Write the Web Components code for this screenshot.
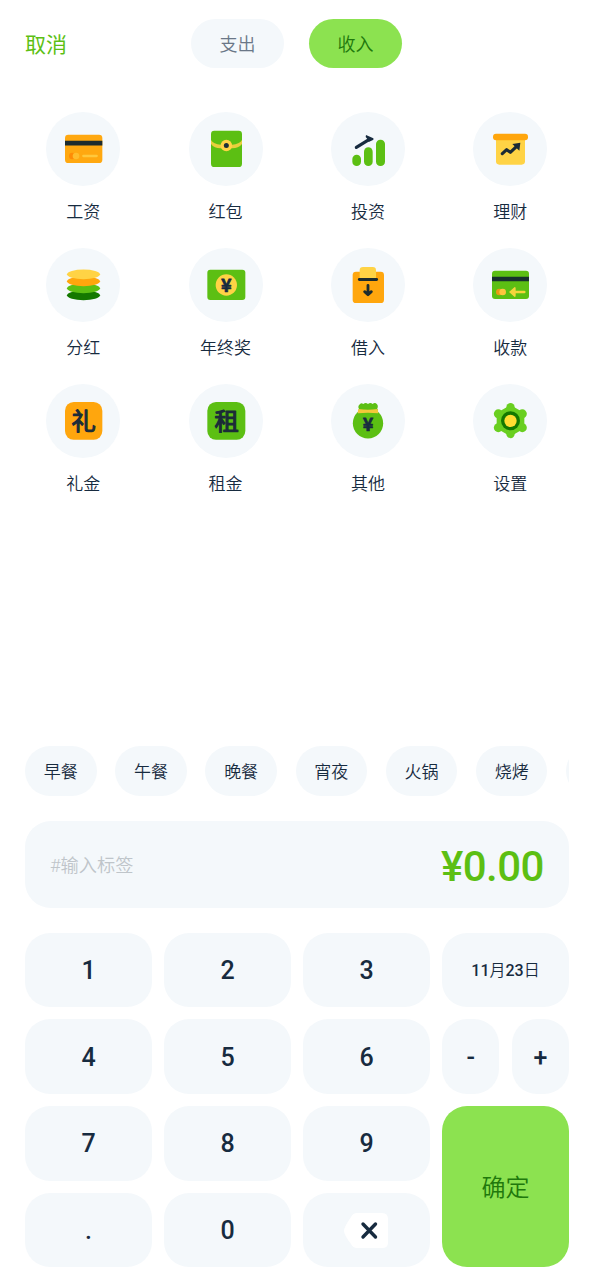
<!DOCTYPE html>
<html lang="zh-CN">
<head>
<meta charset="utf-8">
<title>记一笔</title>
<style>
html,body{margin:0;height:100%;background:#fff;overflow:hidden}
body{font-family:Roboto,"Noto Sans CJK SC",sans-serif;color:#172b3f;--tile:#f4f8fb;--lime:#8ce250;--green:#5cbf13}
</style>
</head>
<body>
<entry-page></entry-page>
<script>
const define = (name, html, setup) => {
  const t = document.createElement('template');
  t.innerHTML = html;
  customElements.define(name, class extends HTMLElement {
    constructor() {
      super();
      this.attachShadow({mode: 'open'}).append(t.content.cloneNode(true));
    }
    connectedCallback() { if (setup) setup(this, this.shadowRoot); }
  });
};

/* Each icon: viewBox, then drawing */
const glyph = 'font-family="Noto Sans CJK SC" font-weight="400" text-anchor="middle" fill="#1b2c38" stroke="#1b2c38" stroke-width="3.500" stroke-linejoin="round"';
const yen = 'font-family="Noto Sans CJK SC" font-weight="700" text-anchor="middle" fill="#172b3f" stroke="#172b3f" stroke-width="2" stroke-linejoin="round"';
const icons = {
  card: ['48 36 222 222', `<rect x="105" y="104" width="112" height="85" rx="10" fill="#ffa810"/><path d="M105 122.500h112v14H105z" fill="#1c2b2e"/><circle cx="127" cy="168" r="10" fill="#ff8c05"/><circle cx="138" cy="168" r="10" fill="#ffbd2c"/><path d="M160 168h40" stroke="#ffc83c" stroke-width="7" stroke-linecap="round"/>`],
  packet: ['476 36 222 222', `<rect x="542" y="92" width="93" height="109" rx="10" fill="#5cbf13"/><path d="M542 120Q550 133 571 134H605Q627 133 635 120V132Q624 145 606 145H570Q552 145 542 132z" fill="#e9cf3d"/><circle cx="588" cy="136.500" r="17.500" fill="#ffd345"/><circle cx="588" cy="136.500" r="7.500" fill="#1c3038"/>`],
  invest: ['33 36 222 222', `<g fill="#5cbf13"><rect x="97" y="164" width="26" height="34" rx="13"/><rect x="132" y="142" width="26" height="56" rx="13"/><rect x="168" y="119" width="27" height="79" rx="13"/></g><path d="M109 142L148 118" stroke="#172b3f" stroke-width="9.500" stroke-linecap="round"/><path d="M138 105L160 115Q162 118 159 120L146 126Q143 116 137 111z" fill="#172b3f"/>`],
  wealth: ['459 36 222 222', `<path d="M528 115h87v69a10 10 0 0 1-10 10h-67a10 10 0 0 1-10-10z" fill="#ffd345"/><rect x="519" y="101" width="105" height="20" rx="9" fill="#ffa60d"/><path d="M547 161L560 149L571 157L590 139" fill="none" stroke="#1b2b35" stroke-width="9.500" stroke-linecap="round" stroke-linejoin="round"/><path d="M577 132L601 128L598 152z" fill="#1b2b35"/>`],
  coins: ['48 36 222 222', `<ellipse cx="160.500" cy="178" rx="49.500" ry="14.500" fill="#147800"/><ellipse cx="160.500" cy="157" rx="49.500" ry="14.500" fill="#5cbf13"/><ellipse cx="160.500" cy="136" rx="49.500" ry="14.500" fill="#ffa60d"/><ellipse cx="160.500" cy="115" rx="49.500" ry="14.500" fill="#ffd345"/>`],
  bonus: ['476 36 222 222', `<rect x="531" y="101" width="114" height="91" rx="9" fill="#5cbf13"/><circle cx="588" cy="147" r="32" fill="#ffd345"/><text x="588" y="167" font-size="54" ${yen}>¥</text>`],
  borrow: ['33 36 222 222', `<rect x="98" y="107" width="94" height="94" rx="10" fill="#ffa60d"/><path d="M119 129V103a10 10 0 0 1 10-10h29a10 10 0 0 1 10 10v26z" fill="#ffd345"/><path d="M118 130.500h52" stroke="#1b2b2e" stroke-width="8.500" stroke-linecap="round"/><path d="M144 148v27M134 167l10 9 10-9" fill="none" stroke="#1b2b2e" stroke-width="8.500" stroke-linecap="round" stroke-linejoin="round"/>`],
  receive: ['459 36 222 222', `<rect x="516" y="104" width="111" height="85" rx="9" fill="#5cbf13"/><path d="M516 122.500h111v13H516z" fill="#17302d"/><circle cx="538" cy="168" r="10" fill="#e99a12"/><circle cx="548" cy="168" r="10" fill="#ffc63e"/><path d="M578 168h35" stroke="#f5d53c" stroke-width="7.500" stroke-linecap="round"/><path d="M567 168L584 153Q588 153 587 159V177Q588 183 584 183z" fill="#f5d53c"/>`],
  gift: ['48 36 222 222', `<rect x="105" y="90" width="112" height="113" rx="26" fill="#ffa60d"/><text x="161" y="174" font-size="73" ${glyph}>礼</text>`],
  rent: ['476 36 222 222', `<rect x="531" y="90" width="114" height="113" rx="26" fill="#5cbf13"/><text x="589" y="174" font-size="73" ${glyph}>租</text>`],
  bag: ['33 36 222 222', `<path d="M118 98Q123 90 130 96Q137 90 144 96Q151 90 158 96Q165 90 171 97Q176 102 171 112H118Q112 104 118 98z" fill="#5cbf13"/><circle cx="144" cy="154" r="45.500" fill="#5cbf13"/><path d="M116 111H173V122H116z" fill="#5cbf13"/><path d="M116 111Q144 115 172 111Q176 117 174 124Q144 120 114 124Q112 116 116 111z" fill="#f3c83a"/><text x="144" y="176" font-size="54" ${yen}>¥</text>`],
  settings: ['459 36 222 222', `<path d="M571.500 107L606 127V165L571.500 185L537 165V127z" fill="#69cf20" stroke="#69cf20" stroke-width="14" stroke-linejoin="round"/><g fill="#69cf20"><circle cx="571.500" cy="105.500" r="12.500"/><circle cx="571.500" cy="186" r="12.500"/><circle cx="535" cy="125.500" r="13.500"/><circle cx="607" cy="125.500" r="13.500"/><circle cx="535" cy="167" r="13.500"/><circle cx="607" cy="167" r="13.500"/></g><circle cx="571.500" cy="146.500" r="28.500" fill="#147800"/><circle cx="571.500" cy="146.500" r="18.500" fill="#ffde32"/>`]
};

define('category-item', `<style>
:host{display:flex;flex-direction:column;align-items:center;height:136px}
.disc{width:74px;height:74px;border-radius:50%;background:var(--tile)}
svg{display:block;width:74px;height:74px}
.name{margin-top:14px;font-size:17px;line-height:24px;font-weight:350}
</style><div class="disc"></div><div class="name"><slot></slot></div>`, (el, root) => {
  const [box, body] = icons[el.getAttribute('icon')];
  root.querySelector('.disc').innerHTML = `<svg viewBox="${box}">${body}</svg>`;
});

define('type-tab', `<style>
:host{display:flex;align-items:center;justify-content:center;box-sizing:border-box;width:93px;height:49px;padding-bottom:2px;border-radius:25px;background:var(--tile);color:#6a7787;font-size:18px;font-weight:350}
:host([active]){background:var(--lime);color:#20780c}
</style><slot></slot>`);

define('top-bar', `<style>
:host{display:grid;grid-template-columns:166px auto;align-items:center;height:49px;padding:19px 25px 0}
.cancel{font-size:21px;color:var(--green);padding-bottom:2px}
.tabs{display:flex;gap:25px}
</style><span class="cancel">取消</span><div class="tabs"><slot></slot></div>`);

define('category-grid', `<style>
:host{display:grid;grid-template-columns:repeat(4,142.400px);margin:44px 0 0 12px}
</style><slot></slot>`);

define('tag-chip', `<style>
:host{display:flex;flex:none;align-items:center;justify-content:center;box-sizing:border-box;width:71.500px;height:50px;padding-bottom:1px;border-radius:25px;background:var(--tile);font-size:17px;font-weight:350}
</style><slot></slot>`);

define('tag-row', `<style>
:host{display:flex;gap:18.700px;margin:0 25px;overflow:hidden}
</style><slot></slot>`);

define('amount-field', `<style>
:host{display:flex;align-items:center;justify-content:space-between;height:87px;margin:25px 25px 0;padding:0 25px;border-radius:26px;background:var(--tile)}
.hint{font-size:18.200px;color:#bfc5ca;font-weight:350;padding-bottom:1px}
.sum{font-size:42px;font-weight:500;color:var(--green);padding-top:3px;letter-spacing:-.5px}
</style><span class="hint"><slot name="hint"></slot></span><span class="sum"><slot></slot></span>`);

define('pad-key', `<style>
:host{display:flex;align-items:center;justify-content:center;border-radius:25px;background:var(--tile);font-size:25px;font-weight:500;padding-top:1px;box-sizing:border-box}
:host([date]){font-size:16px;padding:0 0 1px}
:host([confirm]){grid-row:span 2;background:var(--lime);color:#20780c;font-size:24px;font-weight:350;padding:0 0 3px}
</style><slot></slot>`);

define('key-pair', `<style>
:host{display:grid;grid-template-columns:1fr 1fr;gap:12.500px}
</style><slot></slot>`);

define('erase-icon', `<style>
:host{display:block;width:44px;height:36px}
svg{display:block}
</style><svg width="44" height="36" viewBox="0 0 44 36"><path d="M13 0H38Q44 0 44 6V30Q44 35 38 35H13Q9 35 7 31Q0 22 0 18Q0 14 7 4Q9 0 13 0z" fill="#fff"/><path d="M19 11l12.500 13M31.500 11L19 24" stroke="#172b3f" stroke-width="3.400" stroke-linecap="round"/></svg>`);

define('key-pad', `<style>
:host{display:grid;grid-template-columns:repeat(4,127px);grid-template-rows:repeat(4,74.250px);gap:12.650px 12px;margin:24.500px 25px 0}
</style><slot></slot>`);

define('entry-page', `<style>
:host{display:flex;flex-direction:column;width:594px;height:1280px;background:#fff}
.space{flex:none;height:226px}
.cal{font-weight:350}
erase-icon{margin-left:-1px}
</style>
<top-bar><type-tab>支出</type-tab><type-tab active>收入</type-tab></top-bar>
<category-grid>
<category-item icon="card">工资</category-item><category-item icon="packet">红包</category-item><category-item icon="invest">投资</category-item><category-item icon="wealth">理财</category-item>
<category-item icon="coins">分红</category-item><category-item icon="bonus">年终奖</category-item><category-item icon="borrow">借入</category-item><category-item icon="receive">收款</category-item>
<category-item icon="gift">礼金</category-item><category-item icon="rent">租金</category-item><category-item icon="bag">其他</category-item><category-item icon="settings">设置</category-item>
</category-grid>
<div class="space"></div>
<tag-row><tag-chip>早餐</tag-chip><tag-chip>午餐</tag-chip><tag-chip>晚餐</tag-chip><tag-chip>宵夜</tag-chip><tag-chip>火锅</tag-chip><tag-chip>烧烤</tag-chip><tag-chip></tag-chip></tag-row>
<amount-field><span slot="hint">#输入标签</span>¥0.00</amount-field>
<key-pad>
<pad-key>1</pad-key><pad-key>2</pad-key><pad-key>3</pad-key><pad-key date><span>11<span class="cal">月</span>23<span class="cal">日</span></span></pad-key>
<pad-key>4</pad-key><pad-key>5</pad-key><pad-key>6</pad-key><key-pair><pad-key>-</pad-key><pad-key>+</pad-key></key-pair>
<pad-key>7</pad-key><pad-key>8</pad-key><pad-key>9</pad-key><pad-key confirm>确定</pad-key>
<pad-key>.</pad-key><pad-key>0</pad-key><pad-key><erase-icon></erase-icon></pad-key>
</key-pad>`);
</script>
</body>
</html>
